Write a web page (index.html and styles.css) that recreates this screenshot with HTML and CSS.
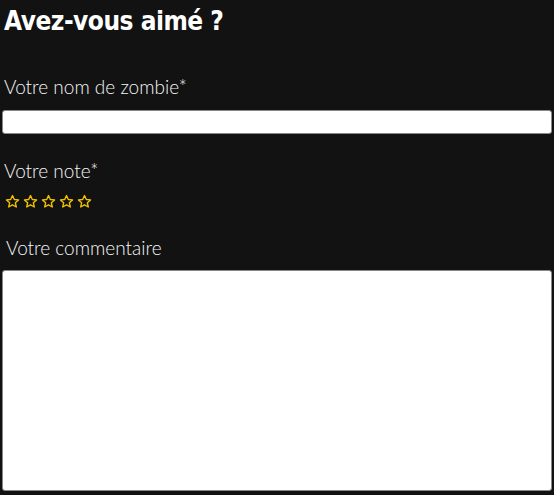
FILE: index.html
```html
<!DOCTYPE html>
<html lang="fr">
<head>
  <meta charset="UTF-8" />
  <meta name="viewport" content="width=device-width, initial-scale=1.0"/>
  <title>Avis zombie</title>
  <link rel="stylesheet" href="styles.css">
</head>
<body>

  <form class="avis">
    <h1>Avez-vous aimé ?</h1>

    <label class="champ" for="nom">Votre nom de zombie*</label>
    <input type="text" id="nom" class="saisie" />

    <p class="champ">Votre note*</p>
    <div class="etoiles">
      <svg viewBox="0 0 24 24"><path d="M12 2.5l2.9 6.3 6.8.7-5.1 4.6 1.5 6.7L12 17.3l-6.1 3.5 1.5-6.7-5.1-4.6 6.8-.7z"/></svg>
      <svg viewBox="0 0 24 24"><path d="M12 2.5l2.9 6.3 6.8.7-5.1 4.6 1.5 6.7L12 17.3l-6.1 3.5 1.5-6.7-5.1-4.6 6.8-.7z"/></svg>
      <svg viewBox="0 0 24 24"><path d="M12 2.5l2.9 6.3 6.8.7-5.1 4.6 1.5 6.7L12 17.3l-6.1 3.5 1.5-6.7-5.1-4.6 6.8-.7z"/></svg>
      <svg viewBox="0 0 24 24"><path d="M12 2.5l2.9 6.3 6.8.7-5.1 4.6 1.5 6.7L12 17.3l-6.1 3.5 1.5-6.7-5.1-4.6 6.8-.7z"/></svg>
      <svg viewBox="0 0 24 24"><path d="M12 2.5l2.9 6.3 6.8.7-5.1 4.6 1.5 6.7L12 17.3l-6.1 3.5 1.5-6.7-5.1-4.6 6.8-.7z"/></svg>
    </div>

    <label class="champ commentaire" for="commentaire">Votre commentaire</label>
    <textarea id="commentaire" class="zone"></textarea>
  </form>

</body>
</html>
```

FILE: styles.css
```css
body {
  margin: 0;
  padding: 0 2px;
  background: #121212;
  color: #f6f6f6;
  font-family: 'Lato', sans-serif;
  font-weight: 300;
  overflow: hidden;
}

.avis {
  display: flex;
  flex-direction: column;
}

h1 {
  margin: 6px 0 0 2px;
  font-family: 'DejaVu Sans Condensed', sans-serif;
  font-weight: bold;
  font-size: 26px;
  letter-spacing: -0.5px;
  color: #ffffff;
}

.champ {
  margin: 40px 0 0 2px;
  font-size: 19px;
  line-height: 22px;
}

.saisie {
  margin: 12px 0 0 0;
  height: 24px;
  box-sizing: border-box;
  border: 1px solid #888;
  border-radius: 3px;
  background: #fff;
}

p.champ {
  margin-top: 26px;
}

.etoiles {
  display: flex;
  gap: 3px;
  margin: 12px 0 0 3px;
}

.etoiles svg {
  width: 15px;
  height: 15px;
  fill: none;
  stroke: #f2c200;
  stroke-width: 2.2;
  stroke-linejoin: round;
}

.commentaire {
  margin: 28px 0 0 4px;
}

.zone {
  margin-top: 11px;
  height: 221px;
  box-sizing: border-box;
  border: 1px solid #888;
  border-radius: 3px;
  background: #fff;
  resize: none;
}
```
